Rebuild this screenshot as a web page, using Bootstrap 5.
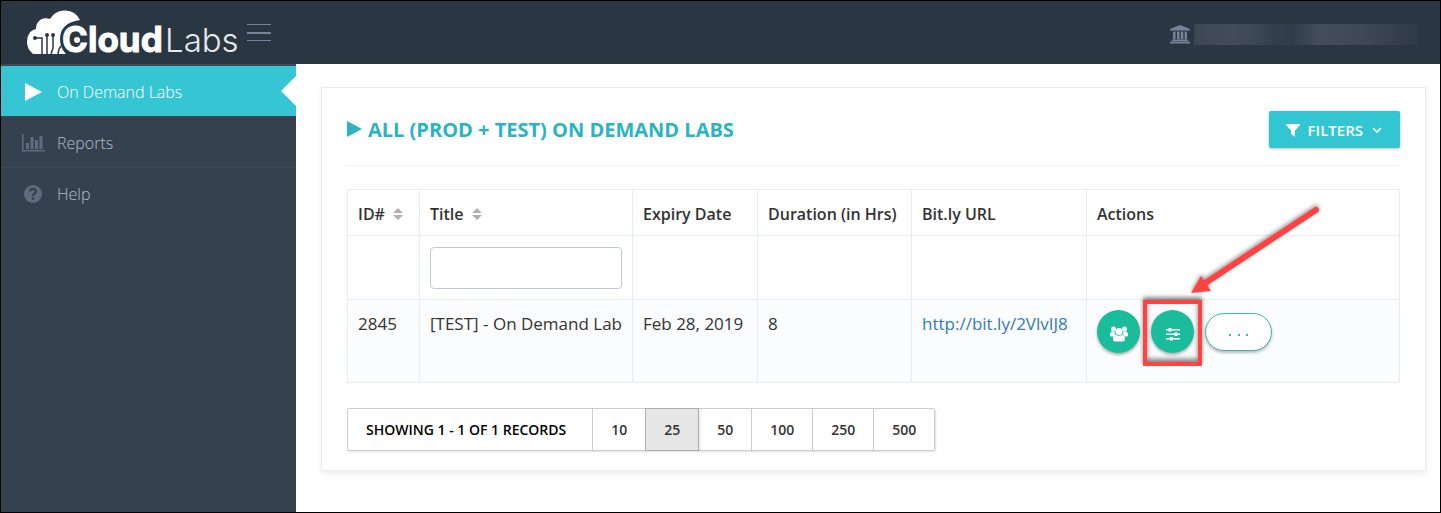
<!DOCTYPE html>
<html lang="en">
<head>
<meta charset="utf-8">
<meta name="viewport" content="width=device-width, initial-scale=1">
<title>CloudLabs - On Demand Labs</title>
<link href="https://cdn.jsdelivr.net/npm/bootstrap@5.3.0/dist/css/bootstrap.min.css" rel="stylesheet">
<style>
  body { font-family: "Open Sans", "Noto Sans", sans-serif; font-size: 16px; color: #333; border: 1px solid #000; }
  .topbar { background: #2b3643; height: 63px; padding: 0 22px 0 25px; }
  .brand-logo { width: 216px; height: 55px; display: block; }
  .menu-toggle { border: 0; background: none; padding: 0; width: 24px; height: 17px; display: flex; flex-direction: column; justify-content: space-between; margin: 0 0 0 5px; }
  .menu-toggle span { height: 1px; width: 24px; background: #77839a; }
  .menu-toggle span:nth-child(2) { height: 2px; }
  .account { gap: 4px; padding-top: 3px; }
  .account-name { width: 224px; height: 21px; background: linear-gradient(90deg, #3d4753 0%, #434d5a 15%, #404a57 25%, #323e4b 36%, #303c49 44%, #444e5a 56%, #3f4955 76%, #36404d 90%, #2f3a47 100%); }
  .side-menu { width: 295px; background: #364150; flex: none; border-top: 2px solid #3d4957; }
  .side-link { height: 51px; padding: 1px 0 0 20px; gap: 12px; color: #b4bcc8; font-weight: 300; border-bottom: 1px solid #3d4957; text-decoration: none; position: relative; }
  .side-link svg { width: 24px; height: 20px; flex: none; color: #606c7d; }
  .side-link.current { background: #36c6d3; color: #fff; }
  .side-link.current svg { color: #fff; }
  .side-link.current::after { content: ""; position: absolute; right: 0; top: 10px; border: 15px solid transparent; border-left: 0; border-right-color: #fff; }
  .side-menu li:last-child .side-link { border-bottom: 0; }
  .page-main { padding: 23px 14px 30px 25px; }
  .lab-panel { border: 1px solid #e7ecf1; box-shadow: 0 3px 6px rgba(0,0,0,.07); padding: 23px 25px 19px; }
  .panel-head { border-bottom: 1px solid #eef1f5; padding-bottom: 17px; margin-bottom: 23px; }
  .panel-title { color: #2ab4c0; font-size: 20px; font-weight: 700; line-height: 24px; gap: 6px; }
  .btn-filters { background: #32c5d2; color: #fff; font-size: 15px; font-weight: 600; line-height: 18px; padding: 10px 17px 9px; gap: 8px; border: 0; border-radius: 2px; box-shadow: 0 1px 3px rgba(0,0,0,.25); }
  .btn-filters:hover { background: #26a1ab; color: #fff; }
  .lab-table { table-layout: fixed; border-color: #e7ecf1; color: #333; margin-bottom: 25px; }
  .lab-table > thead > tr > *, .lab-table > tbody > tr > td { padding: 11px 10px 10px; line-height: 24px; color: #333; white-space: nowrap; }
  .lab-table > thead > tr > th { font-weight: 600; padding: 12px 10px 9px; }
  .lab-table > tbody > tr > td { background: #fbfcfd; height: 83px; font-size: 17px; padding-top: 12px; }
  .lab-table > tbody > tr > .action-cell { padding-top: 10px; }
  .lab-table a { color: #337ab7; text-decoration: none; }
  .col-id { width: 72px; } .col-title { width: 213px; } .col-expiry { width: 125px; } .col-duration { width: 154px; } .col-url { width: 175px; }
  .lab-table .form-control { height: 42px; border-color: #c2cad8; border-radius: 4px; }
  .sort-icon { width: 10px; height: 12px; margin-left: 8px; vertical-align: baseline; }
  .action-list { gap: 11px; }
  .action-round { width: 43px; height: 43px; border: 0; padding: 4px 0 0; border-radius: 50%; background: #1bbc9b; box-shadow: 0 2px 3px rgba(0,0,0,.3); color: #fff; display: flex; align-items: center; justify-content: center; }
  .action-more { width: 67px; height: 38px; border: 1px solid #45b6af; border-radius: 19px; background: #fff; color: #45b6af; padding: 0; box-shadow: 0 2px 3px rgba(0,0,0,.25); }
  .callout-box { position: absolute; inset: -10px -8px -13px; border: 4px solid #ff4343; box-shadow: 0 -3px 4px rgba(0,0,0,.45), inset 0 -3px 5px rgba(0,0,0,.5); pointer-events: none; }
  .callout-arrow { position: absolute; left: 36px; bottom: 57px; width: 140px; height: 96px; pointer-events: none; }
  .pager .btn { height: 43px; font-size: 14px; font-weight: 600; color: #333; background: #fff; border: 1px solid #ccc; border-radius: 2px; padding: 0 18px; box-shadow: 1px 1px 2px rgba(0,0,0,.12); }
  .pager .btn.active { background: #e6e6e6; border-color: #adadad; }
  .pager .btn.record-count { color: #000; padding-right: 26px; }
</style>
</head>
<body class="d-flex flex-column min-vh-100">
<header class="topbar d-flex align-items-center">
  <a href="#" aria-label="CloudLabs">
    <svg class="brand-logo" viewBox="0 0 216 55">
      <path d="M7 49Q1 44 1 37Q1 26 10 24A10 10 0 0 1 24 14A17 17 0 0 1 54 15Q34 18 34 34Q34 43 40 49Z" fill="#fff"/>
      <g fill="none" stroke="#2b3643" stroke-width="1.500"><path d="M9 33h7v16M21 31v18M27 31v12l-2 6M32 49l1-5 2-3"/></g>
      <g fill="#2b3643"><circle cx="9" cy="33" r="2"/><circle cx="21" cy="30" r="2"/><circle cx="27" cy="30" r="2"/></g>
      <text x="36" y="47" font-family="Inter, sans-serif" font-size="35" font-weight="700" fill="#fff" stroke="#fff" stroke-width="1">Cloud</text>
      <text x="139" y="47" font-family="Inter, sans-serif" font-size="33" font-weight="300" fill="#e6e9ec">Labs</text>
      <circle cx="51" cy="35" r="3" fill="#fff"/>
    </svg>
  </a>
  <button class="menu-toggle" type="button" aria-label="Toggle menu"><span></span><span></span><span></span></button>
  <div class="account ms-auto d-flex align-items-center">
    <svg width="20" height="20" viewBox="0 0 20 20" fill="#77839a"><path d="M10 1L20 5v1.500H0V5zM3 7.500h2.500V15H3zM7 7.500h2.500V15H7zM10.800 7.500h2.500V15h-2.500zM14.600 7.500H17V15h-2.400zM2 15.500h16V17H2zM0 17.500h20V19.500H0z"/></svg>
    <div class="account-name"></div>
  </div>
</header>
<div class="d-flex flex-grow-1">
  <nav class="side-menu" aria-label="Main">
    <ul class="list-unstyled mb-0">
      <li><a class="side-link current d-flex align-items-center" href="#"><svg viewBox="0 0 24 20" fill="currentColor"><path d="M4 1l17 9L4 19z"/></svg>On Demand Labs</a></li>
      <li><a class="side-link d-flex align-items-center" href="#"><svg viewBox="0 0 24 20" fill="currentColor"><path d="M1 1h1.500v16H24v1.500H1zM5 10h3v6H5zM9.500 4h3v12h-3zM14 7h3v9h-3zM18.500 3h3v13h-3z"/></svg>Reports</a></li>
      <li><a class="side-link d-flex align-items-center" href="#"><svg viewBox="0 0 24 20"><circle cx="12" cy="10" r="9" fill="currentColor"/><path d="M9 7.500q.5-2.500 3-2.500t3 2.300q0 1.500-1.600 2.400Q12 10.500 12 12" fill="none" stroke="#364150" stroke-width="2.400"/><path d="M10.700 13.300h2.600v2.500h-2.600z" fill="#364150"/></svg>Help</a></li>
    </ul>
  </nav>
  <main class="page-main flex-grow-1 bg-white">
    <section class="lab-panel">
      <div class="panel-head d-flex justify-content-between align-items-center">
        <h1 class="panel-title d-flex align-items-center mb-0"><svg width="15" height="20" viewBox="0 0 15 20" fill="currentColor"><path d="M0 1l15 8L0 17z"/></svg>ALL (PROD + TEST) ON DEMAND LABS</h1>
        <button class="btn btn-filters d-flex align-items-center" type="button"><svg width="14" height="14" viewBox="0 0 14 14" fill="currentColor"><path d="M0 1h14v1L9 7.500V14l-4-3V7.500L0 2z"/></svg>FILTERS<svg width="12" height="12" viewBox="0 0 12 12" fill="none" stroke="currentColor" stroke-width="1.600"><path d="M2 4l4 4 4-4"/></svg></button>
      </div>
      <table class="table table-bordered lab-table">
        <colgroup><col class="col-id"><col class="col-title"><col class="col-expiry"><col class="col-duration"><col class="col-url"><col></colgroup>
        <thead>
          <tr>
            <th scope="col">ID#<svg class="sort-icon" viewBox="0 0 10 12" fill="#b0b0b0"><path d="M5 0l5 5H0zM0 7h10l-5 5z"/></svg></th>
            <th scope="col">Title<svg class="sort-icon" viewBox="0 0 10 12" fill="#b0b0b0"><path d="M5 0l5 5H0zM0 7h10l-5 5z"/></svg></th>
            <th scope="col">Expiry Date</th><th scope="col">Duration (in Hrs)</th><th scope="col">Bit.ly URL</th><th scope="col">Actions</th>
          </tr>
          <tr><td></td><td><input class="form-control" type="text" aria-label="Title"></td><td></td><td></td><td></td><td></td></tr>
        </thead>
        <tbody>
          <tr>
            <td>2845</td><td>[TEST] - On Demand Lab</td><td>Feb 28, 2019</td><td>8</td><td><a href="#">http://bit.ly/2VlvIJ8</a></td>
            <td class="action-cell">
              <div class="action-list d-flex align-items-center">
                <button class="action-round" type="button" aria-label="Users"><svg width="18" height="16" viewBox="0 0 18 16" fill="currentColor"><circle cx="3.500" cy="3" r="2.500"/><circle cx="14.500" cy="3" r="2.500"/><circle cx="9" cy="5.500" r="3.500"/><path d="M0 9q0-3.500 2.500-3.500h2Q4.500 8 6 9l-2 1.500H1.500Q0 10.500 0 9zM18 9q0-3.500-2.500-3.500h-2Q13.500 8 12 9l2 1.500h2.500Q18 10.500 18 9zM3 13q0-4 3-4 3 1.500 6 0 3 0 3 4 0 2.500-2 2.500H5q-2 0-2-2.500z"/></svg></button>
                <div class="position-relative">
                  <button class="action-round" type="button" aria-label="Settings"><svg width="14" height="14" viewBox="0 0 14 14" fill="currentColor"><path d="M0 2h14v1.500H0zM0 6.500h14V8H0zM0 11h14v1.500H0z"/><path d="M2.500 1h3v3.500h-3zM8.500 5.500h3V9h-3zM4 10h3v3.500H4z"/></svg></button>
                  <div class="callout-box"></div>
                  <svg class="callout-arrow" viewBox="0 0 140 96"><g filter="drop-shadow(0 -2px 2px rgba(0,0,0,.4))"><path d="M129 10L17 84" stroke="#ff4343" stroke-width="6" stroke-linecap="round"/><path d="M4 93L14 76L24 91Z" fill="#ff4343"/></g></svg>
                </div>
                <button class="action-more" type="button" aria-label="More"><svg width="20" height="10" viewBox="0 0 20 10" fill="currentColor"><path d="M0 6h2v2H0zM9 6h2v2H9zM17 6h2v2h-2z"/></svg></button>
              </div>
            </td>
          </tr>
        </tbody>
      </table>
      <div class="pager btn-group" role="group" aria-label="Records per page">
        <button class="btn record-count" type="button">SHOWING 1 - 1 OF 1 RECORDS</button>
        <button class="btn" type="button">10</button><button class="btn active" type="button">25</button><button class="btn" type="button">50</button><button class="btn" type="button">100</button><button class="btn" type="button">250</button><button class="btn" type="button">500</button>
      </div>
    </section>
  </main>
</div>
<script src="https://cdn.jsdelivr.net/npm/bootstrap@5.3.0/dist/js/bootstrap.bundle.min.js"></script>
</body>
</html>
